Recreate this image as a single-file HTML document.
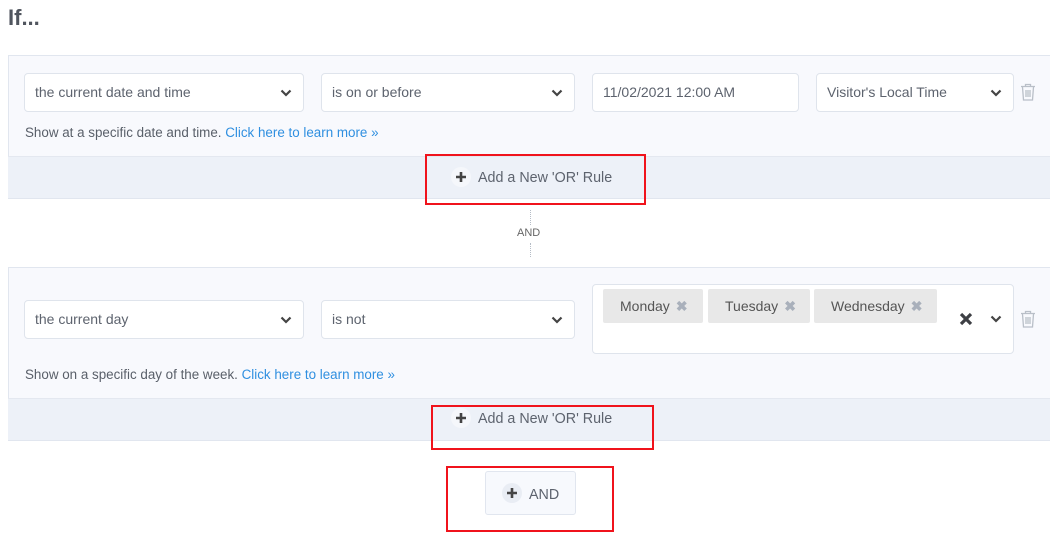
<!DOCTYPE html>
<html><head><meta charset="utf-8">
<style>
*{box-sizing:border-box;margin:0;padding:0}
body{width:1050px;height:538px;background:#fff;font-family:"Liberation Sans",sans-serif;color:#555b66;position:relative;overflow:hidden}
.a{position:absolute}
.panel{left:8px;width:1060px;background:#f8f9fd;border:1px solid #e1e6ef}
.foot{left:8px;width:1060px;background:#edf1f8;border-top:1px solid #e4e8f0}
.sel{background:#fff;border:1px solid #dfe4ec;border-radius:4px;height:39px;font-size:14px;color:#5d636e;padding-left:10px;line-height:37px}
.chev{position:absolute;right:11px;top:15px;width:12px;height:8px}
.help{font-size:13.4px;color:#595f69}
.help b{font-weight:normal;color:#2f8fe0}
.or{font-size:14.3px;color:#5d636e}
.plus{position:absolute;width:20px;height:20px}
.red{border:2px solid #f0131c}
.tag{background:#e8e8e8;border-radius:2px;height:34px;line-height:34px;font-size:14px;color:#555;padding-left:17px}
.tag i{font-style:normal;color:#a9b0bb;font-weight:bold;margin-left:6px}
</style></head><body>
<div class="a" style="left:8px;top:5px;font-size:22px;font-weight:bold;color:#50555e">If...</div>

<div class="a panel" style="top:55px;height:144px"></div>
<div class="a foot" style="top:156px;height:42px"></div>

<div class="a sel" style="left:24px;top:73px;width:280px">the current date and time<svg class="chev" viewBox="0 0 12 8"><path d="M1.5 1.5L6 6L10.5 1.5" fill="none" stroke="#444" stroke-width="2.2"/></svg></div>
<div class="a sel" style="left:321px;top:73px;width:254px">is on or before<svg class="chev" viewBox="0 0 12 8"><path d="M1.5 1.5L6 6L10.5 1.5" fill="none" stroke="#444" stroke-width="2.2"/></svg></div>
<div class="a sel" style="left:592px;top:73px;width:207px">11/02/2021 12:00 AM</div>
<div class="a sel" style="left:816px;top:73px;width:198px">Visitor's Local Time<svg class="chev" viewBox="0 0 12 8"><path d="M1.5 1.5L6 6L10.5 1.5" fill="none" stroke="#444" stroke-width="2.2"/></svg></div>
<svg class="a" style="left:1020px;top:83px" width="16" height="18" viewBox="0 0 16 18"><path d="M1 3.5H15M5.5 3.5V1.5H10.5V3.5M2.5 4L3.5 17H12.5L13.5 4M6 7V14M8 7V14M10 7V14" fill="none" stroke="#b9bfc8" stroke-width="1.3"/></svg>
<div class="a help" style="left:25px;top:125px">Show at a specific date and time. <b>Click here to learn more »</b></div>

<svg class="plus" style="left:451px;top:167px" viewBox="0 0 20 20"><circle cx="10" cy="10" r="10" fill="#f5f7fb"/><path d="M10 5V15M5 10H15" stroke="#444" stroke-width="2.6"/></svg>
<div class="a or" style="left:478px;top:170px">Add a New 'OR' Rule</div>
<div class="a red" style="left:425px;top:154px;width:221px;height:51px"></div>

<div class="a" style="left:530px;top:210px;height:15px;border-left:1px dotted #b5bcc6"></div>
<div class="a" style="left:517px;top:227px;font-size:11px;color:#666">AND</div>
<div class="a" style="left:530px;top:243px;height:14px;border-left:1px dotted #b5bcc6"></div>

<div class="a panel" style="top:267px;height:174px"></div>
<div class="a foot" style="top:398px;height:42px"></div>

<div class="a sel" style="left:24px;top:300px;width:280px">the current day<svg class="chev" viewBox="0 0 12 8"><path d="M1.5 1.5L6 6L10.5 1.5" fill="none" stroke="#444" stroke-width="2.2"/></svg></div>
<div class="a sel" style="left:321px;top:300px;width:254px">is not<svg class="chev" viewBox="0 0 12 8"><path d="M1.5 1.5L6 6L10.5 1.5" fill="none" stroke="#444" stroke-width="2.2"/></svg></div>
<div class="a" style="left:592px;top:284px;width:422px;height:70px;background:#fff;border:1px solid #dfe4ec;border-radius:4px"></div>
<div class="a tag" style="left:603px;top:289px;width:100px">Monday<i>✖</i></div>
<div class="a tag" style="left:708px;top:289px;width:102px">Tuesday<i>✖</i></div>
<div class="a tag" style="left:814px;top:289px;width:123px">Wednesday<i>✖</i></div>
<svg class="a" style="left:959px;top:312px" width="14" height="14" viewBox="0 0 14 14"><path d="M2 2L12 12M12 2L2 12" stroke="#3d3f44" stroke-width="3.2"/></svg>
<svg class="a" style="left:990px;top:315px" width="12" height="8" viewBox="0 0 12 8"><path d="M1.5 1.5L6 6L10.5 1.5" fill="none" stroke="#444" stroke-width="2.2"/></svg>
<svg class="a" style="left:1020px;top:310px" width="16" height="18" viewBox="0 0 16 18"><path d="M1 3.5H15M5.5 3.5V1.5H10.5V3.5M2.5 4L3.5 17H12.5L13.5 4M6 7V14M8 7V14M10 7V14" fill="none" stroke="#b9bfc8" stroke-width="1.3"/></svg>
<div class="a help" style="left:25px;top:367px">Show on a specific day of the week. <b>Click here to learn more »</b></div>

<svg class="plus" style="left:451px;top:408px" viewBox="0 0 20 20"><circle cx="10" cy="10" r="10" fill="#f5f7fb"/><path d="M10 5V15M5 10H15" stroke="#444" stroke-width="2.6"/></svg>
<div class="a or" style="left:478px;top:411px">Add a New 'OR' Rule</div>
<div class="a red" style="left:431px;top:405px;width:223px;height:45px"></div>

<div class="a" style="left:485px;top:471px;width:91px;height:44px;background:#f7f9fd;border:1px solid #e1e6ef;border-radius:3px"></div>
<svg class="plus" style="left:502px;top:483px" viewBox="0 0 20 20"><circle cx="10" cy="10" r="10" fill="#e9edf4"/><path d="M10 5V15M5 10H15" stroke="#444" stroke-width="2.6"/></svg>
<div class="a or" style="left:529px;top:487px">AND</div>
<div class="a red" style="left:446px;top:466px;width:168px;height:66px"></div>
</body></html>
